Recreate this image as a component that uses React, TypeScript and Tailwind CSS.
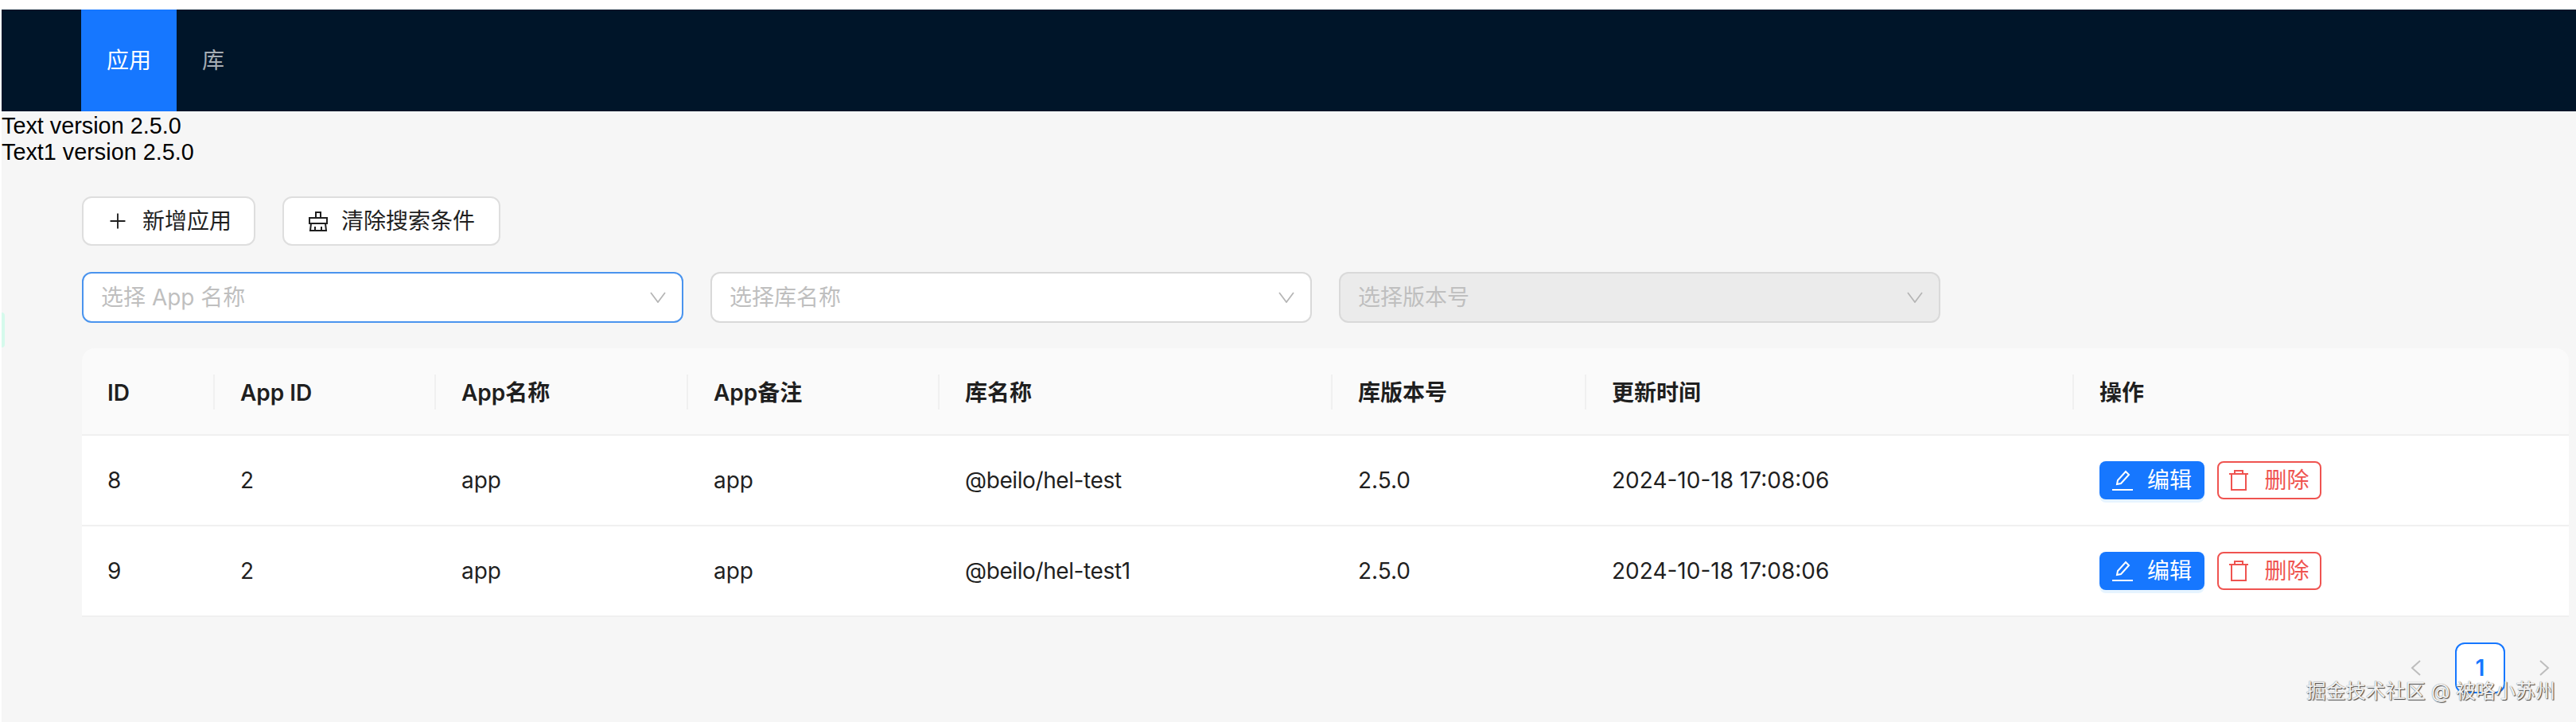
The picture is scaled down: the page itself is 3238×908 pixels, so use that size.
import React from 'react';
import { Plus } from 'lucide-react';

const FONT = "font-['Inter','Noto_Sans_CJK_SC',sans-serif]";

const columns = [
  { title: 'ID', width: 'w-[167px]' },
  { title: 'App ID', width: 'w-[278px]' },
  { title: 'App名称', width: 'w-[317px]' },
  { title: 'App备注', width: 'w-[316px]' },
  { title: '库名称', width: 'w-[494px]' },
  { title: '库版本号', width: 'w-[319px]' },
  { title: '更新时间', width: 'w-[613px]' },
  { title: '操作', width: 'w-[622px]' },
];

const rows = [
  ['8', '2', 'app', 'app', '@beilo/hel-test', '2.5.0', '2024-10-18 17:08:06'],
  ['9', '2', 'app', 'app', '@beilo/hel-test1', '2.5.0', '2024-10-18 17:08:06'],
];

const BroomIcon = () => (
  <svg width="26" height="26" viewBox="0 0 26 26" fill="none" stroke="currentColor" strokeWidth="2">
    <path d="M10 9V2h6v7" />
    <path d="M2 9h22v7H2z" />
    <path d="M4 16l-1 9h20l-1-9" />
    <path d="M9 20v5M17 20v5" />
  </svg>
);

const EditIcon = () => (
  <svg width="26" height="28" viewBox="0 0 26 28" fill="none" stroke="currentColor" strokeWidth="2">
    <path d="M6 19 L7 14 L17 3 L21 7 L11 18 Z" />
    <path d="M0 26h26" />
  </svg>
);

const TrashIcon = () => (
  <svg width="24" height="28" viewBox="0 0 24 28" fill="none" stroke="currentColor" strokeWidth="2">
    <path d="M0 6h24" />
    <path d="M7 6V2h10v4" />
    <path d="M3 6v20h18V6" />
  </svg>
);

const SelectArrow = () => (
  <svg width="20" height="14" viewBox="0 0 20 14" fill="none" stroke="#b5b5b5" strokeWidth="1.75">
    <path d="M1 1l9 12 9-12" />
  </svg>
);

const PageArrow = ({ flip }: { flip?: boolean }) => (
  <svg width="13" height="20" viewBox="0 0 13 20" fill="none" stroke="#bdbdbd" strokeWidth="2" className={flip ? 'rotate-180' : ''}>
    <path d="M12 1L2 10l10 9" />
  </svg>
);

const Select = ({ label, focused, disabled }: { label: string; focused?: boolean; disabled?: boolean }) => {
  const tone = focused ? 'border-[#4a94ee] bg-white' : disabled ? 'border-[#d9d9d9] bg-[#ebebeb]' : 'border-[#d9d9d9] bg-white';
  return (
    <div className={`flex h-[64px] w-[756px] items-center justify-between rounded-[12px] border-2 pl-[22px] pr-[20px] ${tone}`}>
      <span className="text-[28px] text-[#bfbfbf]">{label}</span>
      <SelectArrow />
    </div>
  );
};

const ActionButtons = () => (
  <div className="flex gap-[16px]">
    <div className="flex h-[48px] w-[132px] items-center justify-center gap-[18px] rounded-[8px] bg-[#1677ff] text-[28px] text-white shadow-[0_4px_0_rgba(5,145,255,0.1)]">
      <EditIcon />
      <span>编辑</span>
    </div>
    <div className="flex h-[48px] w-[131px] items-center justify-center gap-[20px] rounded-[8px] border-2 border-[#ef5350] bg-white text-[28px] text-[#ef5350]">
      <TrashIcon />
      <span>删除</span>
    </div>
  </div>
);

export default function App() {
  return (
    <div className={`min-h-[908px] bg-white pl-[2px] pt-[12px] text-[28px] ${FONT}`}>
      <nav className="flex h-[128px] bg-[#001529] pl-[100px]">
        <div className="flex w-[120px] items-center justify-center bg-[#1677ff] text-white">应用</div>
        <div className="flex w-[92px] items-center justify-center text-[#a6adb4]">库</div>
      </nav>

      <main className="relative h-[768px] overflow-hidden bg-[#f6f6f6] pr-[9px]">
        <div className="absolute left-0 top-[253px] h-[44px] w-[4px] rounded-r-full bg-[#d5faec]" />

        <div className="pt-[2px] font-['Liberation_Sans',sans-serif] text-[28.8px] leading-[33px] text-black">
          <div>Text version 2.5.0</div>
          <div>Text1 version 2.5.0</div>
        </div>

        <div className="pl-[101px] pt-[39px]">
          <div className="flex gap-[34px] text-[#1f1f1f]">
            <div className="flex h-[62px] w-[218px] items-center justify-center gap-[16px] rounded-[12px] border-2 border-[#dedede] bg-white">
              <Plus size={30} strokeWidth={1.5} />
              <span>新增应用</span>
            </div>
            <div className="flex h-[62px] w-[274px] items-center justify-center gap-[16px] rounded-[12px] border-2 border-[#dedede] bg-white">
              <BroomIcon />
              <span>清除搜索条件</span>
            </div>
          </div>

          <div className="mt-[33px] flex gap-[34px]">
            <Select label="选择 App 名称" focused />
            <Select label="选择库名称" />
            <Select label="选择版本号" disabled />
          </div>

          <div className="mt-[32px] overflow-hidden rounded-t-[16px]">
            <div className="flex h-[110px] items-center border-b-2 border-[#f0f0f0] bg-[#fafafa] pt-[3px] font-semibold text-[#1f1f1f]">
              {columns.map((col, i) => (
                <div key={col.title} className={`${col.width} relative pl-[32px]`}>
                  {col.title}
                  {i < columns.length - 1 && <span className="absolute right-0 top-[-2px] h-[44px] w-[2px] bg-[#f0f0f0]" />}
                </div>
              ))}
            </div>
            {rows.map((row) => (
              <div key={row[0]} className="flex h-[114px] items-center border-b-2 border-[#f0f0f0] bg-white text-[#1f1f1f]">
                {row.map((cell, i) => (
                  <div key={i} className={`${columns[i].width} pl-[32px] ${i === 4 ? 'tracking-[-0.4px]' : ''}`}>{cell}</div>
                ))}
                <div className={`${columns[7].width} pl-[32px]`}>
                  <ActionButtons />
                </div>
              </div>
            ))}
          </div>

          <div className="mt-[32px] flex items-center justify-end pr-[24px]">
            <PageArrow />
            <div className="ml-[43px] mr-[43px] flex h-[64px] w-[63px] items-center justify-center rounded-[12px] border-2 border-[#1677ff] bg-white font-semibold text-[#1677ff]">1</div>
            <PageArrow flip />
          </div>
        </div>

        <div className="absolute bottom-[20px] right-[26px] whitespace-nowrap text-[25px] text-[#f2f2f2] [text-shadow:1px_1px_1px_#444,0_0_1px_#666]">掘金技术社区 @ 被咯小苏州</div>
      </main>
    </div>
  );
}
